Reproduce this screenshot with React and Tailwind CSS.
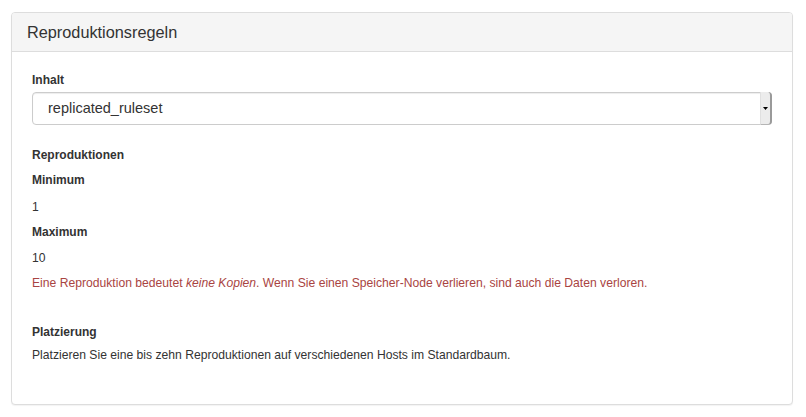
import React from 'react';

const Label = ({ children, className = '' }) => (
  <div className={`text-[12px] leading-[17px] font-bold text-[#333] ${className}`}>{children}</div>
);

const App = () => {
  return (
    <div className="min-h-screen bg-white pt-[12px] pl-[11px] font-['Liberation_Sans',Arial,sans-serif]">
      <div className="w-[782px] h-[393px] bg-white border border-[#ddd] rounded-[4px] shadow-[0_1px_1px_rgba(0,0,0,0.05)]">
        {/* Heading */}
        <div className="h-[39px] bg-[#f5f5f5] border-b border-[#ddd] rounded-t-[3px] px-[15px] flex items-center">
          <h3 className="text-[16.3px] text-[#333]">Reproduktionsregeln</h3>
        </div>

        {/* Body */}
        <div className="pt-[20px] px-[20px]">
          <Label>Inhalt</Label>
          <div className="mt-[3px] h-[33px] flex border border-[#ccc] rounded-[4px] bg-white shadow-[inset_0_1px_1px_rgba(0,0,0,0.075)]">
            <div className="flex-1 flex items-center pl-[15px] text-[14.5px] text-[#333]">replicated_ruleset</div>
            <div className="w-[12px] -my-px -mr-px flex items-center justify-center bg-[#ececec] border-l border-[#e0e0e0] border-r-2 border-r-[#9a9a9a] border-b border-b-[#b5b5b5] rounded-r-[4px]">
              <svg width="5" height="3" viewBox="0 0 5 3"><path d="M0 0H5L2.5 3Z" fill="#000" /></svg>
            </div>
          </div>

          <Label className="mt-[22px]">Reproduktionen</Label>
          <Label className="mt-[8px]">Minimum</Label>
          <div className="mt-[10px] text-[12.15px] leading-[17px] text-[#333]">1</div>
          <Label className="mt-[8px]">Maximum</Label>
          <div className="mt-[9px] text-[12.15px] leading-[17px] text-[#333]">10</div>
          <p className="mt-[8px] text-[12.15px] leading-[17px] text-[#a94442]">
            Eine Reproduktion bedeutet <em>keine Kopien</em>. Wenn Sie einen Speicher-Node verlieren, sind auch die Daten verloren.
          </p>

          <Label className="mt-[32px]">Platzierung</Label>
          <p className="mt-[6px] text-[12.15px] leading-[17px] text-[#333]">
            Platzieren Sie eine bis zehn Reproduktionen auf verschiedenen Hosts im Standardbaum.
          </p>
        </div>
      </div>
    </div>
  );
};

export default App;
